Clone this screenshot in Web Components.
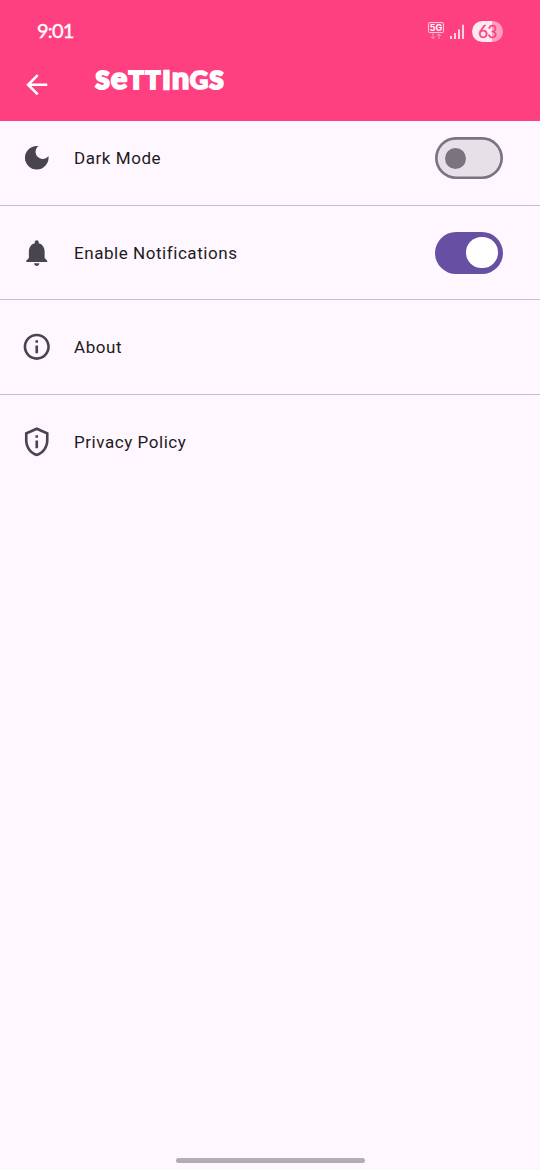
<!DOCTYPE html>
<html lang="en">
<head>
<meta charset="utf-8">
<title>Settings</title>
<style>
html,body{margin:0;height:100%;background:#fef7ff}
</style>
</head>
<body>
<settings-app></settings-app>
<script>
const define = (name, html) => {
  const tpl = document.createElement('template');
  tpl.innerHTML = html;
  customElements.define(name, class extends HTMLElement {
    constructor() {
      super();
      this.attachShadow({mode: 'open'}).append(tpl.content.cloneNode(true));
    }
  });
};

define('status-bar', `
<style>
:host{display:flex;align-items:center;justify-content:space-between;height:20px;padding:21px 37px 0;color:#fff;font-family:Lato,sans-serif}
time{font-size:20px;line-height:20px;letter-spacing:-.8px;font-weight:400;-webkit-text-stroke:.35px #fff;margin-top:-2px}
.right{display:flex;align-items:center}
.net{width:16px;height:18px;margin-right:6px}
.bars{width:14px;height:15px;margin-right:8px}
.battery{width:31px;height:21px;border-radius:10.5px;background:linear-gradient(90deg,#ffeaf1 63%,#ff9ebf 63%);color:#ff4080;font-size:17px;line-height:21px;text-align:center;letter-spacing:-.5px;-webkit-text-stroke:.3px #ff4080}
</style>
<time>9:01</time>
<div class="right">
<svg class="net" viewBox="0 0 16 18"><rect x=".6" y=".6" width="14.8" height="10" rx="1" fill="none" stroke="#ffd5e3" stroke-width="1"/><text x="8" y="9" text-anchor="middle" font-family="Inter,sans-serif" font-weight="700" font-size="9" fill="#fff">5G</text><path d="M5 11.5v5M3 14.7l2 2 2-2M11 17v-5M9 14l2-2 2 2" fill="none" stroke="#ff9fbe" stroke-width="1"/></svg>
<svg class="bars" viewBox="0 0 14 15"><path d="M1 12v3M5 9v6M9 5.5V15M13 .8V15" stroke="#ffe3ec" stroke-width="1.8"/></svg>
<div class="battery">63</div>
</div>`);

define('app-bar', `
<style>
:host{display:block;height:121.4px;background:#ff4080;color:#fff}
.bar{display:flex;align-items:flex-start;padding:24px 0 0 21px}
.back{width:31.5px;height:31.5px;margin-top:4px;fill:#fff}
h1{margin:-4px 0 0 42.5px;font:900 25.5px/32px Lato,sans-serif}
</style>
<status-bar></status-bar>
<div class="bar">
<svg class="back" viewBox="0 0 24 24"><path d="M20 11H7.83l5.59-5.59L12 4l-8 8 8 8 1.41-1.41L7.83 13H20v-2z"/></svg>
<h1><slot></slot></h1>
</div>`);

define('unicase-title', `
<style>
:host{display:flex;align-items:baseline;white-space:nowrap;text-transform:uppercase;-webkit-text-stroke:1.7px #fff}
span{display:flex;justify-content:center}
.low{text-transform:none;font-size:31px}
.wide{-webkit-text-stroke-width:2.2px}
.stem{-webkit-text-stroke-width:2.6px}
.tight{font-size:24.5px}
</style><span class="wide" style="width:15px">S</span><span class="low" style="width:18px">e</span><span class="tight wide" style="width:16.5px">t</span><span class="tight wide" style="width:17px">t</span><span class="tight stem" style="width:10px">i</span><span class="low" style="width:18px">n</span><span style="width:19px">g</span><span class="wide" style="width:16px">s</span>`);

define('setting-row', `
<style>
:host{display:flex;align-items:center;height:73.5px;padding:0 37px 0 21px;color:#1d1b20;font:17px/24px Roboto,sans-serif;letter-spacing:.55px}
.label{flex:1;margin-left:21.5px}
::slotted(svg){width:31.5px;height:31.5px;fill:#49454f}
</style>
<slot name="icon"></slot><span class="label"><slot></slot></span><slot name="action"></slot>`);

define('toggle-switch', `
<style>
:host{display:flex;align-items:center;box-sizing:border-box;width:68.25px;height:42px;border-radius:21px;box-shadow:inset 0 0 0 2.625px #79747e;background:#e6e0e9;padding:0 10.5px}
i{width:21px;height:21px;border-radius:50%;background:#79747e}
:host([checked]){box-shadow:none;background:#6750a4;justify-content:flex-end;padding:0 5.25px}
:host([checked]) i{width:31.5px;height:31.5px;background:#fff}
</style><i></i>`);

define('list-divider', `
<style>
:host{display:flex;align-items:center;height:21px}
hr{flex:1;margin:0;border:0;height:1px;background:#c6c0cc}
</style><hr>`);

define('settings-app', `
<style>
:host{display:flex;flex-direction:column;height:100vh;background:#fef7ff;overflow:hidden}
main{flex:1}
.home{width:189px;height:5.5px;border-radius:3px;background:#b2acb3;margin:0 auto 7px}
</style>
<app-bar><unicase-title></unicase-title></app-bar>
<main>
<setting-row><svg slot="icon" viewBox="0 0 24 24"><path d="M12 3c-4.97 0-9 4.03-9 9s4.03 9 9 9 9-4.03 9-9c0-.46-.04-.92-.1-1.36-.98 1.37-2.58 2.26-4.4 2.26-2.98 0-5.4-2.42-5.4-5.4 0-1.81.89-3.42 2.26-4.4-.44-.06-.9-.1-1.36-.1z"/></svg>Dark Mode<toggle-switch slot="action"></toggle-switch></setting-row>
<list-divider></list-divider>
<setting-row><svg slot="icon" viewBox="0 0 24 24"><path d="M12 22c1.1 0 2-.9 2-2h-4c0 1.1.89 2 2 2zm6-6v-5c0-3.07-1.64-5.64-4.5-6.32V4c0-.83-.67-1.5-1.5-1.5s-1.5.67-1.5 1.5v.68C7.63 5.36 6 7.92 6 11v5l-2 2v1h16v-1l-2-2z"/></svg>Enable Notifications<toggle-switch slot="action" checked></toggle-switch></setting-row>
<list-divider></list-divider>
<setting-row><svg slot="icon" viewBox="0 0 24 24"><path d="M11 7h2v2h-2zm0 4h2v6h-2zm1-9C6.48 2 2 6.48 2 12s4.48 10 10 10 10-4.48 10-10S17.52 2 12 2zm0 18c-4.41 0-8-3.59-8-8s3.59-8 8-8 8 3.59 8 8-3.59 8-8 8z"/></svg>About</setting-row>
<list-divider></list-divider>
<setting-row><svg slot="icon" viewBox="0 0 24 24"><path d="M12 1L3 5v6c0 5.55 3.84 10.74 9 12 5.16-1.26 9-6.45 9-12V5l-9-4zm7 10c0 4.52-2.98 8.69-7 9.93-4.02-1.24-7-5.41-7-9.93V6.3l7-3.11 7 3.11V11zM11 7h2v2h-2zm0 4h2v6h-2z"/></svg>Privacy Policy</setting-row>
</main>
<div class="home"></div>`);
</script>
</body>
</html>
